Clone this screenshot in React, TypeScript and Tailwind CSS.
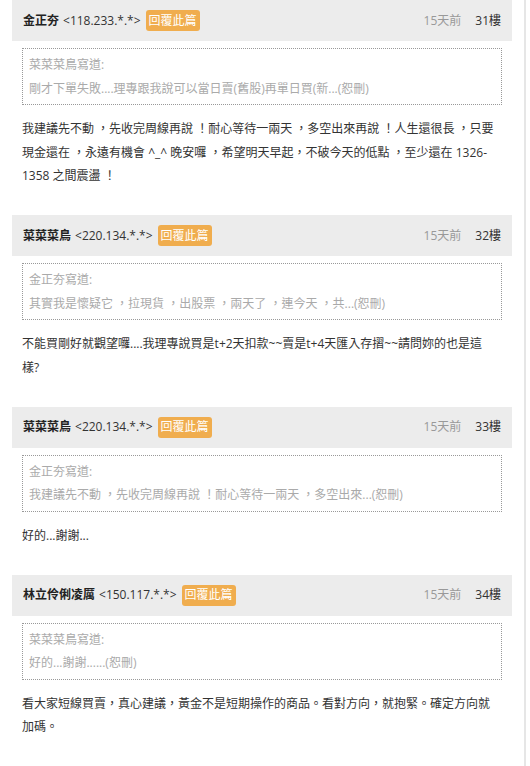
import React from 'react'

interface Post {
  name: string
  ip: string
  floor: string
  quoteAuthor: string
  quote: string
  body: string[]
}

const posts: Post[] = [
  {
    name: '金正夯',
    ip: '<118.233.*.*>',
    floor: '31樓',
    quoteAuthor: '菜菜菜鳥寫道:',
    quote: '剛才下單失敗....理專跟我說可以當日賣(舊股)再單日買(新...(恕刪)',
    body: [
      '我建議先不動 ，先收完周線再說 ！耐心等待一兩天 ，多空出來再說 ！人生還很長 ，只要',
      '現金還在 ，永遠有機會 ^_^ 晚安囉 ，希望明天早起，不破今天的低點 ，至少還在 1326-',
      '1358 之間震盪 ！',
    ],
  },
  {
    name: '菜菜菜鳥',
    ip: '<220.134.*.*>',
    floor: '32樓',
    quoteAuthor: '金正夯寫道:',
    quote: '其實我是懷疑它 ，拉現貨 ，出股票 ，兩天了 ，連今天 ，共...(恕刪)',
    body: [
      '不能買剛好就觀望囉....我理專說買是t+2天扣款~~賣是t+4天匯入存摺~~請問妳的也是這',
      '樣?',
    ],
  },
  {
    name: '菜菜菜鳥',
    ip: '<220.134.*.*>',
    floor: '33樓',
    quoteAuthor: '金正夯寫道:',
    quote: '我建議先不動 ，先收完周線再說 ！耐心等待一兩天 ，多空出來...(恕刪)',
    body: ['好的...謝謝...'],
  },
  {
    name: '林立伶俐凌厲',
    ip: '<150.117.*.*>',
    floor: '34樓',
    quoteAuthor: '菜菜菜鳥寫道:',
    quote: '好的...謝謝......(恕刪)',
    body: [
      '看大家短線買賣，真心建議，黃金不是短期操作的商品。看對方向，就抱緊。確定方向就',
      '加碼。',
    ],
  },
]

function PostHeader({ name, ip, floor }: { name: string; ip: string; floor: string }) {
  return (
    <div className="flex h-[41px] items-center justify-between bg-[#ececec] px-[11px] text-[12px]">
      <div className="flex items-center">
        <span className="font-bold text-[#222]">{name}</span>
        <span className="ml-[4px] text-[#333]">{ip}</span>
        <span className="ml-[5px] flex h-[21px] items-center rounded-[3px] bg-[#f0ad4e] px-[3px] text-[12px] text-white">
          回覆此篇
        </span>
      </div>
      <div className="flex items-center">
        <span className="text-[#999]">15天前</span>
        <span className="ml-[14px] text-[#333]">{floor}</span>
      </div>
    </div>
  )
}

function PostItem({ post }: { post: Post }) {
  return (
    <div className="pb-[27.5px]">
      <PostHeader name={post.name} ip={post.ip} floor={post.floor} />
      <div className="mx-[10px] mt-[7px] border border-dotted border-[#999] px-[6px] py-[4px] text-[12px] leading-[23.5px] text-[#aaa]">
        <div>{post.quoteAuthor}</div>
        <div className="whitespace-nowrap">{post.quote}</div>
      </div>
      <div className="mx-[10px] mt-[12px] text-[12px] leading-[23.5px] text-[#333]">
        {post.body.map((line, i) => (
          <div key={i} className="whitespace-nowrap">
            {line}
          </div>
        ))}
      </div>
    </div>
  )
}

export default function App() {
  return (
    <div
      className="flex h-[766px] w-[530px] overflow-hidden bg-white"
      style={{ fontFamily: '"Open Sans", "Noto Sans CJK TC", sans-serif' }}
    >
      <div className="w-[524px] shrink-0 pl-[12px] pr-[12px]">
        {posts.map((p, i) => (
          <PostItem key={i} post={p} />
        ))}
        <div className="h-[41px] bg-[#ececec]" />
      </div>
      <div className="w-[2px] shrink-0 bg-[#e6e6e6]" />
      <div className="flex-1 bg-white" />
    </div>
  )
}
